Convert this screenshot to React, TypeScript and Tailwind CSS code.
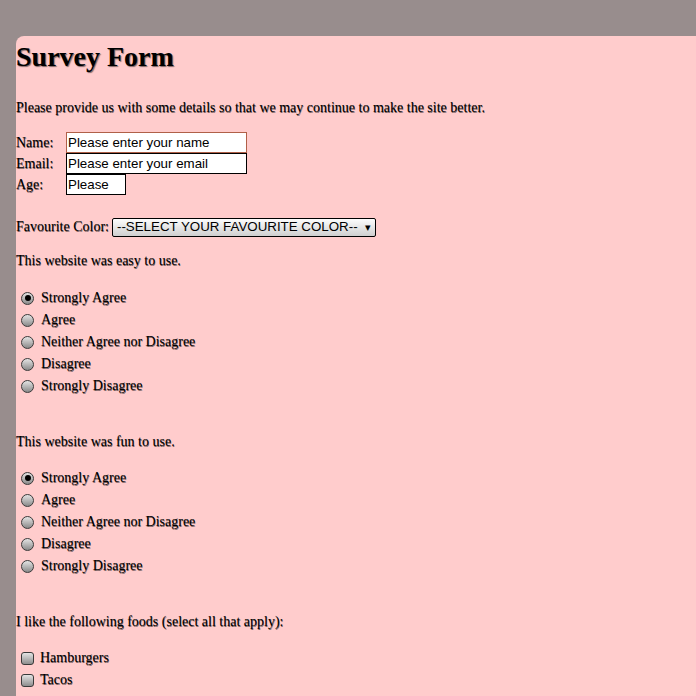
import React from "react";

const serif = "font-['Liberation_Serif',serif]";
const sans = "font-['Liberation_Sans',Arial,sans-serif]";

function Radio({ checked, label }: { checked?: boolean; label: string }) {
  return (
    <div className="flex h-[22px] items-center">
      <span className="ml-[5px] flex h-[13px] w-[13px] items-center justify-center rounded-full border border-[#3a3a3a] bg-[linear-gradient(#e4e4e4,#8a8a8a)]">
        {checked && <span className="h-[6px] w-[6px] rounded-full bg-black" />}
      </span>
      <span className="ml-[7px]">{label}</span>
    </div>
  );
}

function Check({ label }: { label: string }) {
  return (
    <div className="flex h-[22px] items-center">
      <span className="ml-[5px] h-[13px] w-[13px] rounded-[3px] border border-[#3a3a3a] bg-[linear-gradient(#e4e4e4,#8e8e8e)]" />
      <span className="ml-[6px]">{label}</span>
    </div>
  );
}

const opts = ["Strongly Agree", "Agree", "Neither Agree nor Disagree", "Disagree", "Strongly Disagree"];

export default function App() {
  return (
    <div className="h-[696px] w-[696px] overflow-hidden bg-[#988d8d] pl-[16px] pt-[36px]">
      <div className={`h-[700px] rounded-tl-[8px] bg-[#ffcccc] text-[14px] leading-[16px] text-black ${serif} [text-shadow:0.5px_0.5px_0.6px_rgba(0,0,0,0.55)]`}>
        <h1 className="pt-[5px] text-[28px] font-bold leading-[32px] [text-shadow:1px_1px_1px_rgba(0,0,0,0.5)]">Survey Form</h1>
        <p className="mt-[27px]">Please provide us with some details so that we may continue to make the site better.</p>
        <div className="mt-[16px] flex flex-col">
          <div className="flex h-[21px] items-center">
            <span className="w-[50px]">Name:</span>
            <div className={`flex h-[21px] w-[181px] items-center border border-[#b06048] bg-white px-[1px] text-[13.33px] ${sans} [text-shadow:none]`}>Please enter your name</div>
          </div>
          <div className="flex h-[21px] items-center">
            <span className="w-[50px]">Email:</span>
            <div className={`flex h-[21px] w-[181px] items-center border border-black bg-white px-[1px] text-[13.33px] ${sans} [text-shadow:none]`}>Please enter your email</div>
          </div>
          <div className="flex h-[21px] items-center">
            <span className="w-[50px]">Age:</span>
            <div className={`flex h-[21px] w-[60px] items-center overflow-hidden border border-black bg-white px-[1px] text-[13.33px] ${sans} [text-shadow:none]`}>Please</div>
          </div>
        </div>
        <div className="mt-[22px] flex h-[20px] items-center">
          <span>Favourite Color:</span>
          <div className={`ml-[3px] flex h-[19px] w-[264px] items-center justify-between rounded-[2px] border border-black bg-[linear-gradient(#fdfdfd,#cfcfcf)] pl-[4px] pr-[4px] text-[13.33px] ${sans} [text-shadow:none]`}>
            <span>--SELECT YOUR FAVOURITE COLOR--</span>
            <span className="text-[11px] leading-none">▾</span>
          </div>
        </div>
        <p className="mt-[16px]">This website was easy to use.</p>
        <div className="mt-[18px]">
          {opts.map((o, i) => (
            <Radio key={o} label={o} checked={i === 0} />
          ))}
        </div>
        <p className="mt-[37px]">This website was fun to use.</p>
        <div className="mt-[17px]">
          {opts.map((o, i) => (
            <Radio key={o} label={o} checked={i === 0} />
          ))}
        </div>
        <p className="mt-[37px]">I like the following foods (select all that apply):</p>
        <div className="mt-[17px]">
          <Check label="Hamburgers" />
          <Check label="Tacos" />
          <Check label="Pizza" />
        </div>
      </div>
    </div>
  );
}
